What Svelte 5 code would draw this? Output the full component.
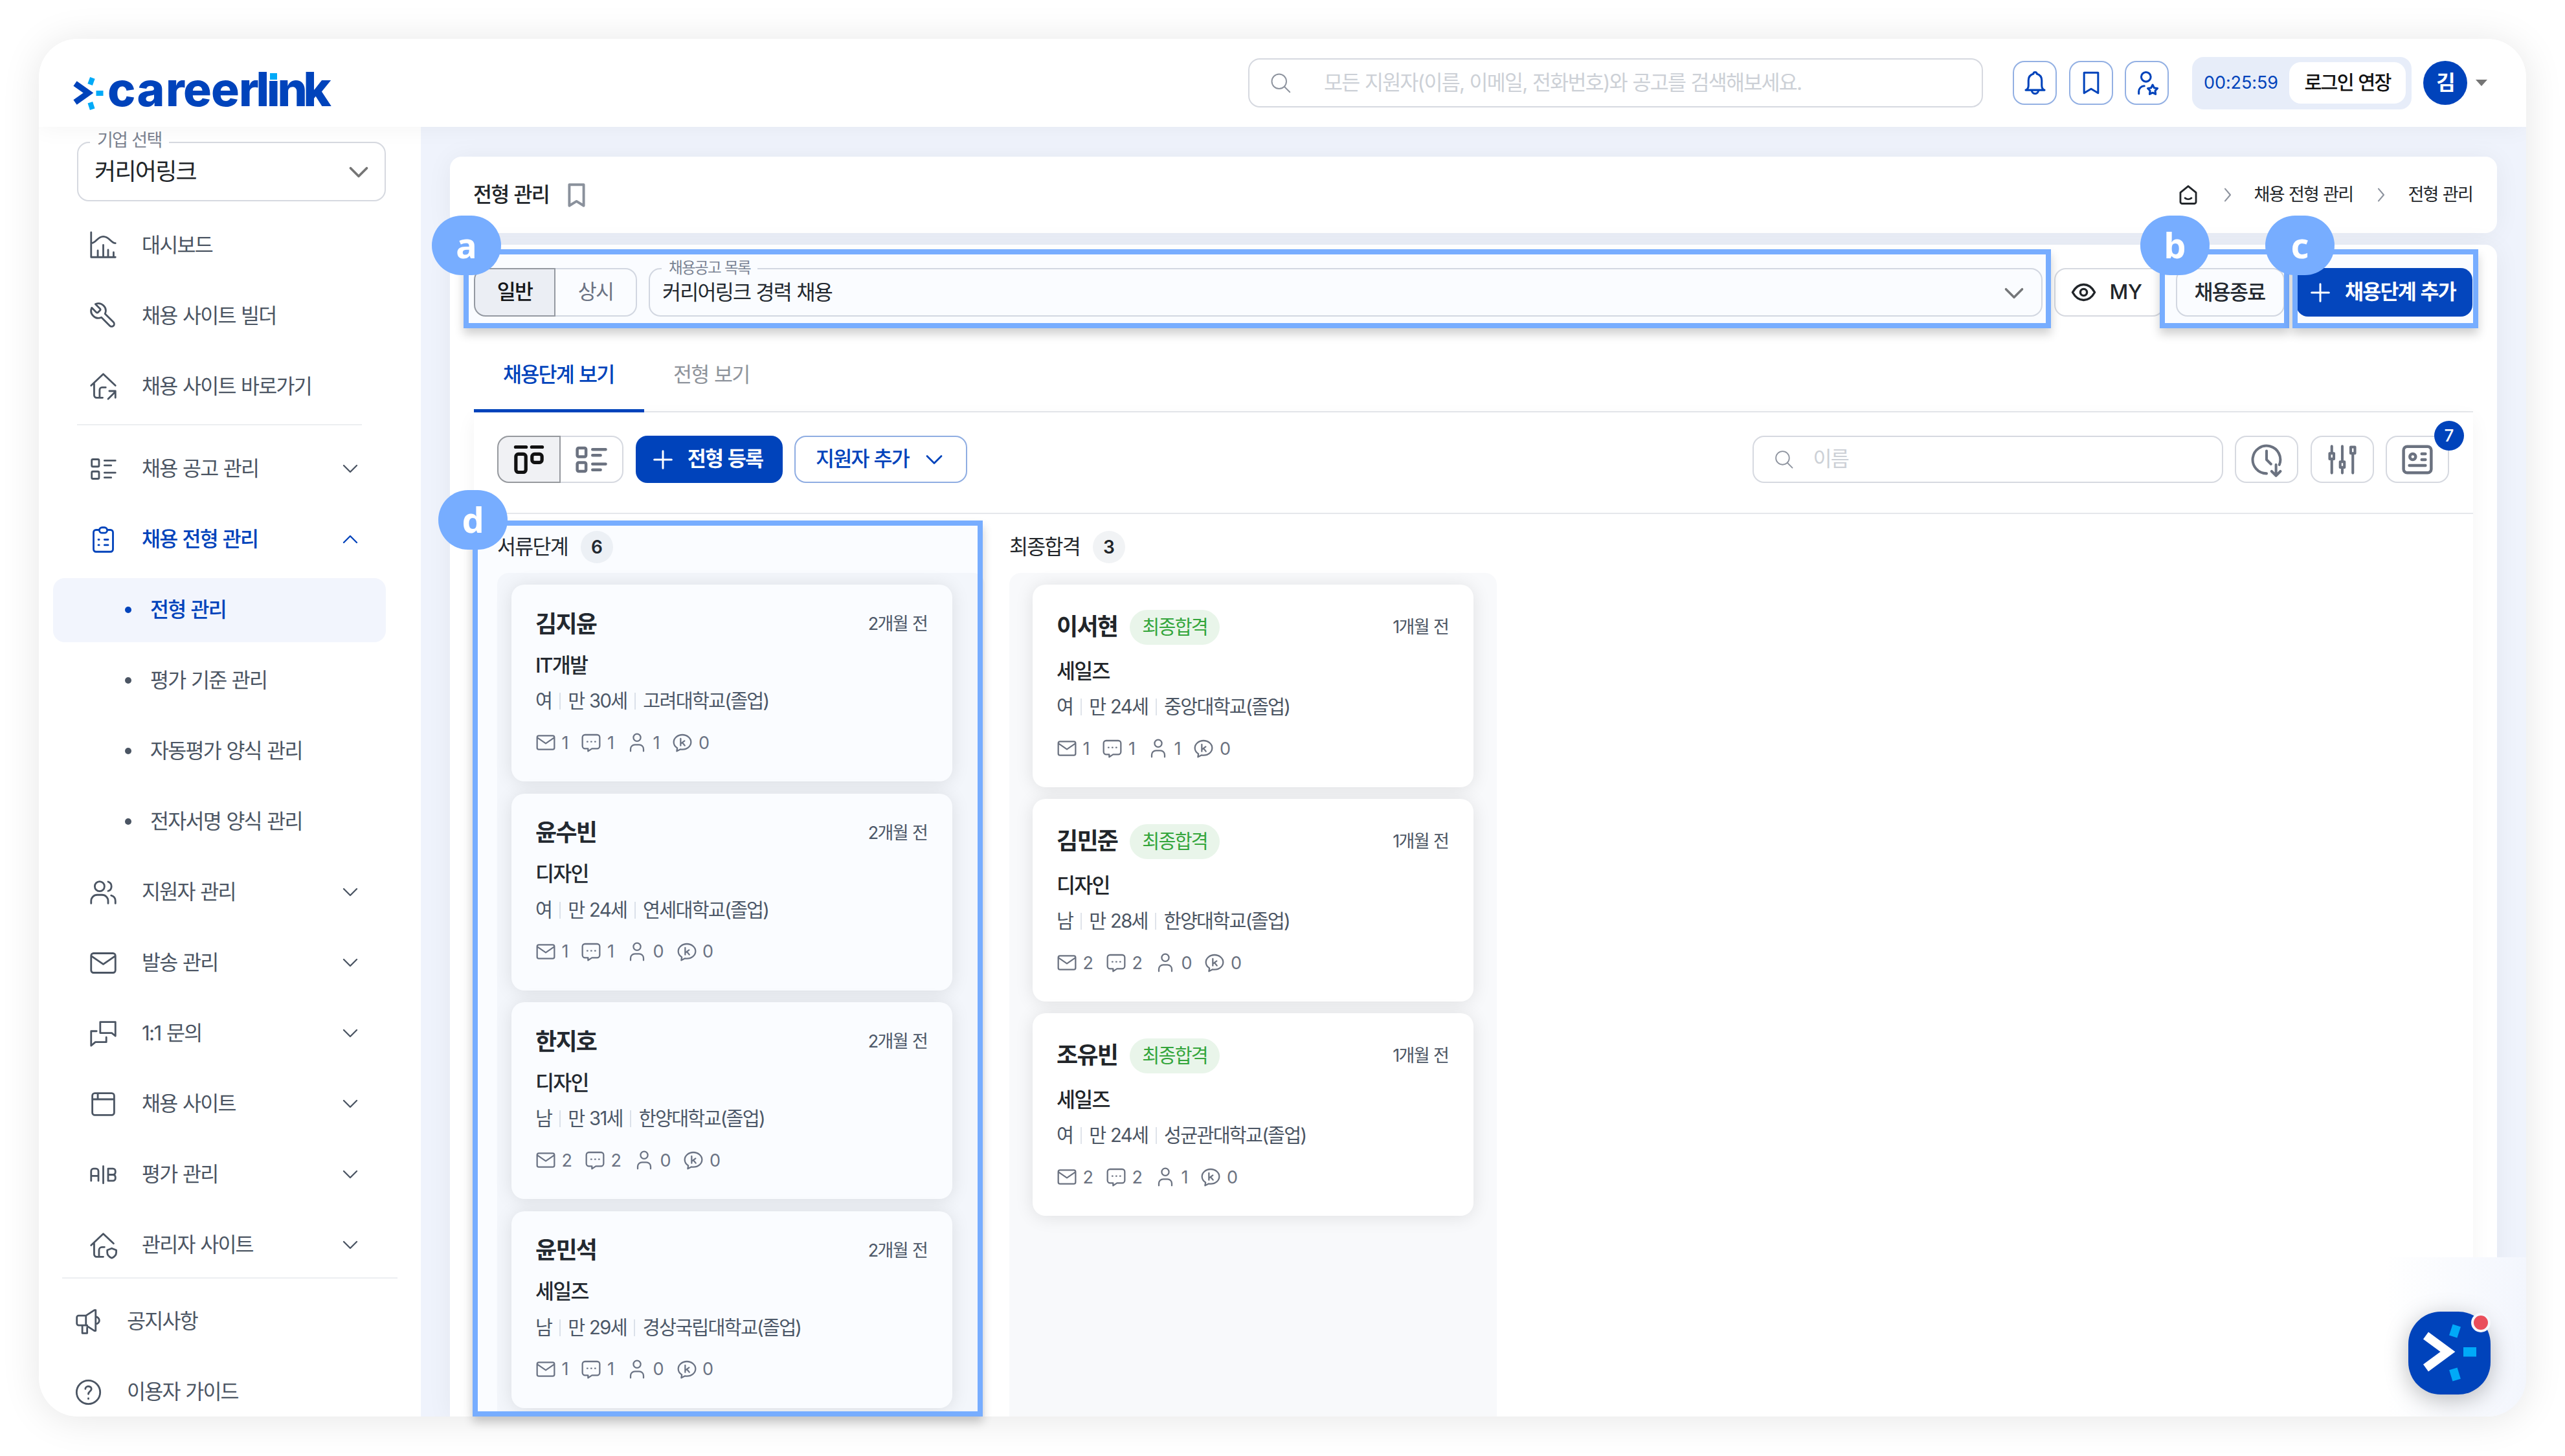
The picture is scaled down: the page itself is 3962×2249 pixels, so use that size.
<script lang="ts">
  type MenuItem = { icon: string; label: string; open?: boolean; arrow?: boolean };
  type Applicant = {
    name: string;
    job: string;
    sex: string;
    age: number;
    school: string;
    date: string;
    counts: number[];
    passed?: boolean;
  };

  const icons: Record<string, string> = {
    chart: 'M2 1.5v20.5h20M2 10.5c4 0 5-5.5 10-5.5s6.5 5.5 10 5.5M7.5 22v-5.5M12 22v-10M16 22v-6M20.5 22v-4',
    wrench: 'M9.3 6.3a1 1 0 0 1 0 1.4L7.7 9.3a1 1 0 0 1-1.4 0L2.53 5.53a6 6 0 0 0 7.94 7.94l6.91 6.91a2.12 2.12 0 0 0 3-3l-6.91-6.91a6 6 0 0 0-7.94-7.94z',
    homeLink: 'M2 11.5l10-9.5 10 9.5M4.5 10v9.5a2 2 0 0 0 2 2h5M9 21v-6a2 2 0 0 1 2-2h3M16 22.5l6-6M17 16h5v5.5',
    list: 'M3.5 4h4a1 1 0 0 1 1 1v4a1 1 0 0 1-1 1h-4a1 1 0 0 1-1-1V5a1 1 0 0 1 1-1zM3.5 14h4a1 1 0 0 1 1 1v4a1 1 0 0 1-1 1h-4a1 1 0 0 1-1-1v-4a1 1 0 0 1 1-1zM13 5h9M13 9h5.5M13 15h9M13 19h5.5',
    clipboard: 'M9 4H6a2 2 0 0 0-2 2v14a2 2 0 0 0 2 2h12a2 2 0 0 0 2-2V6a2 2 0 0 0-2-2h-3M11 2h2a2 2 0 0 1 0 4.5h-2a2 2 0 0 1 0-4.5zM8 12h.6M13 12h3M8 16.5h.6M13 16.5h3',
    users: 'M2 21v-2a5 5 0 0 1 5-5h4a5 5 0 0 1 5 5v2M9 3a4 4 0 1 1 0 8 4 4 0 0 1 0-8zM16 3.2a4 4 0 0 1 0 7.6M18.5 14.5c2.2.6 3.5 2.3 3.5 4.5v2',
    mail: 'M4 4h16a2 2 0 0 1 2 2v12a2 2 0 0 1-2 2H4a2 2 0 0 1-2-2V6a2 2 0 0 1 2-2zM2.5 6.5L12 13l9.5-6.5',
    chats: 'M9.5 2.5h12.5v11.5l-3-2.5h-9.5zM6.5 10H2v12l3.5-3h9v-4',
    browser: 'M5 3h14a2 2 0 0 1 2 2v14a2 2 0 0 1-2 2H5a2 2 0 0 1-2-2V5a2 2 0 0 1 2-2zM3 8h18M7.5 3.5v4',
    ab: 'M2 17v-8a2 2 0 0 1 2-2h2a2 2 0 0 1 2 2v8M2 13h6M12 5v14M16 7h4a2 2 0 0 1 2 2v1a2 2 0 0 1-2 2h-4zM16 12h4a2 2 0 0 1 2 2v1a2 2 0 0 1-2 2h-4z',
    homeShield: 'M2 12l10-9.500 8.500 8M4.500 10.500v9a2 2 0 0 0 2 2h5.500M8.500 21v-5a2.500 2.500 0 0 1 2.500-2.500h2M19 14.500l3.700 1.500v2c0 2-1.500 3.600-3.700 4.500-2.200-.900-3.700-2.500-3.700-4.500v-2z',
    mega: 'M4 7h6l7-4.500h1v17h-1l-7-4.500H4a1.500 1.500 0 0 1-1.500-1.500v-5A1.500 1.500 0 0 1 4 7zM10 7v8M7 15v6.500h4v-6.500M18 8a3 3 0 0 1 0 6',
    help: 'M12 2.300a9.700 9.700 0 1 1 0 19.400 9.700 9.700 0 0 1 0-19.400zM9.500 9.300c.200-3 5.300-2.700 5 .200-.200 1.700-2.500 1.800-2.500 4M12 17v.400',
    down: 'M6 9l6 6 6-6',
    up: 'M6 15l6-6 6 6',
    right: 'M9 5l6 7-6 7',
    search: 'M10.5 3a7.5 7.5 0 1 1 0 15 7.5 7.5 0 0 1 0-15zM16 16l5.5 5.5',
    bell: 'M10.5 3.5a1.500 1.500 0 0 1 3 0c2.800.800 4.500 3 4.500 6v4.500c0 2 .800 3.500 2.500 4.200h-17c1.700-.700 2.500-2.200 2.500-4.200V9.500c0-3 1.700-5.200 4.500-6zM9 18.500a3 3 0 0 0 6 0',
    bookmark: 'M5.5 2.5h13v19l-6.500-4-6.500 4z',
    userStar: 'M11 2a4.300 4.300 0 1 1 0 8.600A4.300 4.300 0 0 1 11 2zM4.500 21.500v-2a5 5 0 0 1 5-5M17 13.500l1.400 2.700 3 .500-2.100 2.200.400 3-2.700-1.300-2.700 1.300.400-3-2.100-2.200 3-.500z',
    home: 'M3.5 9.5L12 2.5l8.500 7v10a2 2 0 0 1-2 2h-13a2 2 0 0 1-2-2zM8.500 15.500c2 1.600 5 1.600 7 0',
    eye: 'M2 12c2.500-4.500 6-7 10-7s7.500 2.500 10 7c-2.500 4.500-6 7-10 7s-7.500-2.500-10-7zM12 9a3 3 0 1 1 0 6 3 3 0 0 1 0-6z',
    plus: 'M12 4v16M4 12h16',
    board: 'M2.500 3h7.500M14 3h7.500M4.500 8h3.500a1.800 1.800 0 0 1 1.800 1.800v9.400a1.800 1.800 0 0 1-1.800 1.800H4.500a1.800 1.800 0 0 1-1.800-1.800V9.800A1.800 1.800 0 0 1 4.500 8zM16 8h3.500a1.800 1.800 0 0 1 1.800 1.800v2.400a1.800 1.800 0 0 1-1.800 1.800H16a1.800 1.800 0 0 1-1.800-1.800V9.800A1.800 1.800 0 0 1 16 8z',
    clock: 'M12 21.500a9.500 9.500 0 1 1 8.800-6M12 6v6l3 3M18.500 15.500v7M15.500 20l3 3 3-3',
    sliders: 'M4.500 2.500v5M4.500 11.500v10M3 7.500h3v4H3zM12 2.500v10.500M12 18v3.500M10.500 13.500h3v4h-3zM19.500 7.500v14M18 3h3v4.500h-3z',
    profile: 'M5 3h14a2.500 2.500 0 0 1 2.500 2.500v13a2.500 2.500 0 0 1-2.500 2.500H5a2.500 2.500 0 0 1-2.500-2.500v-13A2.500 2.500 0 0 1 5 3zM8.800 8a2 2 0 1 1 0 4 2 2 0 0 1 0-4zM15 8h2.500M15 12h2.500M6.500 16h11',
    bubble: 'M5 3h14a3 3 0 0 1 3 3v10a3 3 0 0 1-3 3h-6l-4.500 3v-3H5a3 3 0 0 1-3-3V6a3 3 0 0 1 3-3zM7.500 11h.500M12 11h.500M16.500 11h.500',
    person: 'M12 2a4.200 4.200 0 1 1 0 8.400A4.200 4.200 0 0 1 12 2zM4.500 22v-2.500a5 5 0 0 1 5-5h5a5 5 0 0 1 5 5V22',
    kakao: 'M12 3c5.500 0 10 3.700 10 8.500s-4.500 8.500-10 8.500c-.900 0-1.600 0-2.400-.200L5.500 22l.600-3.600C3.500 16.800 2 14.300 2 11.500 2 6.700 6.500 3 12 3zM10 7.500v8M14.500 10l-4 3M12 12l2.800 3.500',
  };
  const statIcons = ['mail', 'bubble', 'person', 'kakao'];

  const topMenu: MenuItem[] = [
    { icon: 'chart', label: '대시보드' },
    { icon: 'wrench', label: '채용 사이트 빌더' },
    { icon: 'homeLink', label: '채용 사이트 바로가기' },
  ];
  const openMenu: MenuItem[] = [
    { icon: 'list', label: '채용 공고 관리', arrow: true },
    { icon: 'clipboard', label: '채용 전형 관리', arrow: true, open: true },
  ];
  const subMenu = ['전형 관리', '평가 기준 관리', '자동평가 양식 관리', '전자서명 양식 관리'];
  const restMenu: MenuItem[] = [
    { icon: 'users', label: '지원자 관리', arrow: true },
    { icon: 'mail', label: '발송 관리', arrow: true },
    { icon: 'chats', label: '1:1 문의', arrow: true },
    { icon: 'browser', label: '채용 사이트', arrow: true },
    { icon: 'ab', label: '평가 관리', arrow: true },
    { icon: 'homeShield', label: '관리자 사이트', arrow: true },
  ];
  const footMenu: MenuItem[] = [
    { icon: 'mega', label: '공지사항' },
    { icon: 'help', label: '이용자 가이드' },
  ];

  const columns: { title: string; total: number; cards: Applicant[] }[] = [
    {
      title: '서류단계',
      total: 6,
      cards: [
        { name: '김지윤', job: 'IT개발', sex: '여', age: 30, school: '고려대학교(졸업)', date: '2개월 전', counts: [1, 1, 1, 0] },
        { name: '윤수빈', job: '디자인', sex: '여', age: 24, school: '연세대학교(졸업)', date: '2개월 전', counts: [1, 1, 0, 0] },
        { name: '한지호', job: '디자인', sex: '남', age: 31, school: '한양대학교(졸업)', date: '2개월 전', counts: [2, 2, 0, 0] },
        { name: '윤민석', job: '세일즈', sex: '남', age: 29, school: '경상국립대학교(졸업)', date: '2개월 전', counts: [1, 1, 0, 0] },
      ],
    },
    {
      title: '최종합격',
      total: 3,
      cards: [
        { name: '이서현', job: '세일즈', sex: '여', age: 24, school: '중앙대학교(졸업)', date: '1개월 전', counts: [1, 1, 1, 0], passed: true },
        { name: '김민준', job: '디자인', sex: '남', age: 28, school: '한양대학교(졸업)', date: '1개월 전', counts: [2, 2, 0, 0], passed: true },
        { name: '조유빈', job: '세일즈', sex: '여', age: 24, school: '성균관대학교(졸업)', date: '1개월 전', counts: [2, 2, 1, 0], passed: true },
      ],
    },
  ];
</script>

{#snippet icon(name: string, size: number, weight: number = 1.5)}
  <svg class="icon" width={size} height={size} viewBox="0 0 24 24" stroke-width={weight}>
    <path d={icons[name]} />
  </svg>
{/snippet}

{#snippet menuRow(item: MenuItem)}
  <div class="row" class:on={item.open}>
    {@render icon(item.icon, 45)}
    <span class="label">{item.label}</span>
    {#if item.arrow}{@render icon(item.open ? 'up' : 'down', 40, 1.4)}{/if}
  </div>
{/snippet}

<div class="window">
  <header>
    <svg class="logo" width="440" height="90" viewBox="110 95 440 90">
      <path class="mark" d="M116 129l20.500 14.500-20.500 14.500" />
      <g class="ray">
        <rect x="137" y="120" width="8" height="11" transform="rotate(20 141 125.500)" />
        <rect x="148.500" y="140" width="11" height="8" />
        <rect x="137" y="158" width="8" height="11" transform="rotate(-18 141 163.500)" />
      </g>
      <text x="166 211.500 256 283 326 369 395.500 412 428.500 468.500" y="164">careerlink</text>
      <rect class="dot-bg" x="413" y="100" width="19" height="25" />
      <rect class="ray" x="417" y="113" width="11" height="10" />
    </svg>
    <div class="search global">
      {@render icon('search', 36, 1.3)}
      <span>모든 지원자(이름, 이메일, 전화번호)와 공고를 검색해보세요.</span>
    </div>
    <div class="quick">
      <button>{@render icon('bell', 41, 1.8)}</button>
      <button>{@render icon('bookmark', 40, 1.8)}</button>
      <button>{@render icon('userStar', 41, 1.8)}</button>
    </div>
    <div class="session">
      <span class="timer">00:25:59</span>
      <button>로그인 연장</button>
    </div>
    <div class="avatar">김</div>
    <i class="caret"></i>
  </header>

  <div class="body">
    <aside>
      <div class="company">
        <span class="legend">기업 선택</span>
        <span>커리어링크</span>
        {@render icon('down', 50, 1.8)}
      </div>
      <nav>
        {#each topMenu as item}{@render menuRow(item)}{/each}
        <hr />
        {#each openMenu as item}{@render menuRow(item)}{/each}
        {#each subMenu as label, i}
          <div class="row sub" class:active={i === 0}><i></i><span class="label">{label}</span></div>
        {/each}
        {#each restMenu as item}{@render menuRow(item)}{/each}
      </nav>
      <nav class="foot">
        {#each footMenu as item}{@render menuRow(item)}{/each}
      </nav>
    </aside>

    <main>
      <section class="crumbs">
        <h1>전형 관리</h1>
        <span class="pin">{@render icon('bookmark', 41, 2.3)}</span>
        <div class="path">
          {@render icon('home', 34, 2)}
          <span class="sep">{@render icon('right', 32, 1.6)}</span>
          <span>채용 전형 관리</span>
          <span class="sep">{@render icon('right', 32, 1.6)}</span>
          <span>전형 관리</span>
        </div>
      </section>

      <section class="board">
        <div class="filters">
          <div class="toggle kind">
            <button class="sel">일반</button>
            <button>상시</button>
          </div>
          <div class="posting">
            <span class="legend">채용공고 목록</span>
            <span>커리어링크 경력 채용</span>
            {@render icon('down', 50, 1.7)}
          </div>
          <button class="btn my">{@render icon('eye', 41, 2)}<span>MY</span></button>
          <button class="btn end">채용종료</button>
          <button class="btn primary step">{@render icon('plus', 40, 1.8)}<span>채용단계 추가</span></button>
        </div>

        <div class="tabs">
          <span class="tab current">채용단계 보기</span>
          <span class="tab">전형 보기</span>
        </div>

        <div class="panel">
          <div class="tools">
            <div class="toggle view">
              <button class="sel">{@render icon('board', 52, 2.4)}</button>
              <button>{@render icon('list', 54, 2)}</button>
            </div>
            <button class="btn primary reg">{@render icon('plus', 40, 1.8)}<span>전형 등록</span></button>
            <button class="btn outline"><span>지원자 추가</span>{@render icon('down', 44, 1.5)}</button>
            <div class="search local">
              {@render icon('search', 33, 1.3)}
              <span>이름</span>
            </div>
            <button class="tool">{@render icon('clock', 54, 1.8)}</button>
            <button class="tool">{@render icon('sliders', 52, 1.9)}</button>
            <button class="tool">{@render icon('profile', 54, 2)}<em>7</em></button>
          </div>

          <div class="columns">
            {#each columns as col}
              <div class="column">
                <h2>{col.title}<b>{col.total}</b></h2>
                <div class="lane" class:final={col.cards[0].passed}>
                  {#each col.cards as a}
                    <article>
                      <div class="head" class:tall={a.passed}>
                        <strong>{a.name}</strong>
                        {#if a.passed}<span class="badge">최종합격</span>{/if}
                        <time>{a.date}</time>
                      </div>
                      <div class="job">{a.job}</div>
                      <div class="info">
                        <span>{a.sex}</span><i></i><span>만 {a.age}세</span><i></i><span>{a.school}</span>
                      </div>
                      <div class="stats">
                        {#each a.counts as n, i}
                          <span>{@render icon(statIcons[i], 32, 1.7)}{n}</span>
                        {/each}
                      </div>
                    </article>
                  {/each}
                </div>
              </div>
            {/each}
          </div>
        </div>
      </section>
    </main>
  </div>

  <div class="dock">
    <div class="chat">
      <svg width="127" height="128" viewBox="0 0 127 128">
        <path d="M27 37l34 25-34 25" fill="none" stroke="#fff" stroke-width="13.500" />
        <g class="ray">
          <rect x="65.500" y="21" width="13" height="18" transform="rotate(18 72 30)" />
          <rect x="85" y="55" width="20" height="14.500" />
          <rect x="65.500" y="88" width="13" height="18" transform="rotate(-17 72 97)" />
        </g>
      </svg>
      <i></i>
    </div>
  </div>
</div>

<!-- guide callouts laid over the page -->
<div class="frame a"></div>
<div class="frame b"></div>
<div class="frame c"></div>
<div class="frame d"></div>
<span class="mark-label a">a</span>
<span class="mark-label b">b</span>
<span class="mark-label c">c</span>
<span class="mark-label d">d</span>

<style>
  :global(body) {
    background: #fff;
  }
  :global(#app) {
    position: relative;
    width: 3962px;
    height: 2249px;
    overflow: hidden;
    font-family: Inter, 'Noto Sans CJK KR', sans-serif;
    font-size: 31.5px;
    line-height: 1.3;
    letter-spacing: -0.055em;
    word-spacing: 0.04em;
    color: #212529;
    --blue: #0043bb;
    --line: #d6d9e0;
    --gray: #4b5563;
  }
  :global(#app *) {
    box-sizing: border-box;
  }
  button {
    display: flex;
    align-items: center;
    justify-content: center;
    padding: 0;
    border: 2px solid var(--line);
    border-radius: 18px;
    background: #fff;
    color: inherit;
    font: inherit;
    letter-spacing: inherit;
    word-spacing: inherit;
    white-space: nowrap;
  }
  .icon {
    flex: none;
    display: block;
    fill: none;
    stroke: currentColor;
    stroke-linecap: round;
    stroke-linejoin: round;
  }
  .ray {
    fill: #00aaf8;
  }
  .window {
    position: relative;
    width: 3842px;
    height: 2128px;
    margin: 60px 0 0 60px;
    border-radius: 60px;
    background: #fff;
    box-shadow: 0 4px 60px rgba(0, 0, 0, 0.1);
    overflow: hidden;
  }

  /* header */
  header {
    position: relative;
    z-index: 2;
    display: flex;
    align-items: center;
    height: 136px;
    padding: 0 60px 0 50px;
    background: #fff;
    box-shadow: 0 0 36px rgba(0, 0, 0, 0.05);
  }
  .logo {
    margin-top: 24px;
  }
  .logo text {
    font-size: 73px;
    font-weight: 800;
    letter-spacing: 0;
    fill: var(--blue);
  }
  .mark {
    fill: none;
    stroke: var(--blue);
    stroke-width: 9;
  }
  .dot-bg {
    fill: #fff;
  }
  .search {
    display: flex;
    align-items: center;
    border: 2px solid var(--line);
    border-radius: 18px;
    color: #ccd0d6;
  }
  .search .icon {
    color: #8d939e;
  }
  .global {
    width: 1135px;
    height: 76px;
    margin-left: auto;
    padding-left: 30px;
    gap: 49px;
  }
  .quick {
    display: flex;
    gap: 18.5px;
    margin-left: 46px;
    color: var(--blue);
  }
  .quick button {
    width: 68px;
    height: 68px;
    border-color: #93b0e3;
  }
  .session {
    display: flex;
    align-items: center;
    justify-content: space-between;
    width: 339px;
    height: 81px;
    margin-left: 36px;
    padding: 0 9px 0 18px;
    border-radius: 18px;
    background: #e7edf9;
  }
  .timer {
    font-size: 27px;
    letter-spacing: -0.003em;
    color: var(--blue);
  }
  .session button {
    width: 180px;
    height: 64px;
    border: 0;
    font-size: 29.25px;
    font-weight: 500;
    color: #111;
  }
  .avatar {
    width: 68px;
    margin-left: 18px;
    border-radius: 50%;
    background: var(--blue);
    color: #fff;
    font-size: 32px;
    font-weight: 600;
    line-height: 68px;
    text-align: center;
  }
  .caret {
    margin-left: 13px;
    border: 9.5px solid transparent;
    border-top: 10px solid #757575;
    border-bottom: 0;
  }

  /* sidebar */
  .body {
    display: flex;
    height: 1992px;
  }
  aside {
    width: 590px;
    flex: none;
    padding-top: 23px;
    color: var(--gray);
  }
  .company,
  .posting {
    position: relative;
    display: flex;
    align-items: center;
    justify-content: space-between;
    border: 2px solid var(--line);
    border-radius: 18px;
    color: #212529;
  }
  .company {
    width: 477px;
    height: 92px;
    margin: 0 0 18px 59px;
    padding: 1px 15px 0 25px;
    font-size: 36px;
  }
  .company .icon,
  .posting .icon {
    color: #757575;
  }
  .legend {
    position: absolute;
    top: -22px;
    left: 18px;
    padding: 0 11px;
    background: #fff;
    color: #7b8290;
    font-size: 27px;
  }
  nav {
    display: flex;
    flex-direction: column;
    gap: 9.6px;
    padding-left: 22px;
  }
  hr {
    width: 440px;
    height: 2px;
    margin: -1px 0 8px 37px;
    border: 0;
    background: #eceef1;
  }
  .row {
    display: flex;
    align-items: center;
    width: 514px;
    height: 99.4px;
    padding: 0 35px 0 55px;
    border-radius: 18px;
  }
  .row .label {
    flex: 1;
    margin-left: 37px;
    padding-top: 1px;
  }
  .row.on {
    color: var(--blue);
    font-weight: 500;
  }
  .row.sub {
    padding-left: 111px;
  }
  .row.sub i {
    width: 10px;
    height: 10px;
    border-radius: 50%;
    background: currentColor;
  }
  .row.sub .label {
    margin-left: 29px;
  }
  .row.active {
    background: #f2f5fd;
    color: var(--blue);
    font-weight: 500;
  }
  .foot {
    width: 518px;
    margin-left: 36px;
    padding: 17px 0 0;
    border-top: 2px solid #eceef1;
  }
  .foot .row {
    padding-left: 18px;
  }

  /* main */
  main {
    flex: 1;
    display: flex;
    flex-direction: column;
    gap: 18px;
    padding: 46px 45px 0;
    background: #eff3fc;
  }
  section {
    background: #fff;
    box-shadow: 0 2px 40px rgba(0, 0, 0, 0.055);
  }
  .crumbs {
    display: flex;
    align-items: center;
    height: 118px;
    padding: 0 38px 0 36px;
    border-radius: 18px;
  }
  h1 {
    margin: 0;
    font-size: 31.5px;
    font-weight: 500;
  }
  .pin {
    margin-left: 22px;
    color: #8a919c;
  }
  .path {
    display: flex;
    align-items: center;
    margin-left: auto;
    font-size: 27px;
  }
  .sep {
    margin: 0 25px 0 28px;
    color: #8d939e;
  }
  .board {
    flex: 1;
    padding: 36px 37px 0;
    border-radius: 18px 18px 0 0;
  }
  .filters {
    display: flex;
    gap: 18px;
    height: 75px;
  }
  .toggle {
    display: flex;
    flex: none;
  }
  .toggle button {
    color: #6b7280;
    border-left: 0;
    border-radius: 0 18px 18px 0;
  }
  .toggle .sel {
    border: 2px solid #96999e;
    border-radius: 18px 0 0 18px;
    background: #f0f1f4;
    color: #111;
    font-weight: 500;
  }
  .kind button {
    width: 126px;
  }
  .posting {
    flex: none;
    width: 2153px;
    padding: 2px 17px 0 19px;
  }
  .posting .legend {
    top: -17px;
    font-size: 23.6px;
  }
  .btn {
    flex: none;
    font-weight: 500;
  }
  .my {
    width: 170px;
    padding-right: 9px;
    gap: 19px;
    letter-spacing: -0.01em;
  }
  .end {
    width: 168px;
    padding: 1px 2px 0 0;
  }
  .primary {
    border: 0;
    background: var(--blue);
    color: #fff;
    font-weight: 600;
  }
  .step {
    width: 272px;
    padding-right: 9px;
    gap: 18px;
  }
  .tabs {
    display: flex;
    height: 148px;
    border-bottom: 2px solid #e5e7eb;
  }
  .tab {
    padding: 70px 45px 0;
    color: #8f949c;
    font-size: 31.5px;
    white-space: nowrap;
  }
  .current {
    width: 263px;
    height: 148px;
    border-bottom: 5px solid var(--blue);
    color: var(--blue);
    font-weight: 500;
  }
  .panel {
    height: 1551px;
    box-shadow: 0 10px 28px rgba(0, 0, 0, 0.05);
  }
  .tools {
    display: flex;
    gap: 18.5px;
    height: 157px;
    padding: 36px 37px 46px 36px;
    border-bottom: 2px solid #e5e7eb;
  }
  .view button {
    width: 97.5px;
  }
  .reg {
    width: 227px;
    padding-right: 8px;
    gap: 18px;
  }
  .outline {
    width: 267px;
    padding-left: 4px;
    gap: 17px;
    border-color: #8fade2;
    color: var(--blue);
  }
  .local {
    width: 727px;
    margin-left: auto;
    padding-left: 30px;
    gap: 29px;
  }
  .tool {
    position: relative;
    width: 98px;
    color: #6b7280;
  }
  .tool em {
    position: absolute;
    top: -25px;
    right: -25px;
    width: 46px;
    border-radius: 50%;
    background: var(--blue);
    color: #fff;
    font-size: 26px;
    font-style: normal;
    font-weight: 500;
    line-height: 46px;
    letter-spacing: 0;
  }

  /* kanban */
  .columns {
    display: flex;
    gap: 38px;
    padding: 26px 36px 0;
  }
  .column {
    width: 753px;
  }
  h2 {
    display: flex;
    align-items: center;
    gap: 20px;
    height: 50px;
    margin: 0 0 15px;
    font-size: 31.5px;
    font-weight: 400;
  }
  h2 b {
    width: 50px;
    border-radius: 50%;
    background: #f1f3f5;
    font-size: 28px;
    font-weight: 600;
    line-height: 50px;
    letter-spacing: 0;
    text-align: center;
  }
  .lane {
    display: flex;
    flex-direction: column;
    gap: 18.5px;
    height: 1330px;
    padding: 18px 50px 0 22px;
    border-radius: 18px 18px 0 0;
    background: #f8f9fb;
  }
  .final {
    gap: 18px;
    padding: 18px 36px 0;
  }
  article {
    flex: none;
    padding: 38.5px 39px 42.5px 37px;
    border-radius: 20px;
    background: #fff;
    box-shadow: 0 2px 28px rgba(0, 0, 0, 0.1);
  }
  .head {
    display: flex;
    align-items: center;
    height: 45px;
  }
  .tall {
    height: 54px;
  }
  .head strong {
    font-size: 36px;
    font-weight: 700;
  }
  .badge {
    width: 139px;
    margin-left: 19px;
    border-radius: 27px;
    background: #e9f5ea;
    color: #34a53c;
    font-size: 29.25px;
    line-height: 54px;
    text-align: center;
  }
  time {
    margin-left: auto;
    font-size: 27px;
    color: var(--gray);
  }
  .job {
    margin-top: 18px;
    font-weight: 500;
    line-height: 45px;
  }
  .info {
    display: flex;
    align-items: center;
    gap: 11.5px;
    margin-top: 13.5px;
    font-size: 29.25px;
    line-height: 40px;
    color: var(--gray);
  }
  .info i {
    width: 2px;
    height: 26px;
    background: #dfe3ea;
  }
  .stats {
    display: flex;
    gap: 19px;
    margin-top: 26.5px;
    font-size: 27px;
    line-height: 35px;
    letter-spacing: 0;
    color: #6b7280;
  }
  .stats span {
    display: flex;
    align-items: center;
    gap: 8.5px;
  }

  /* chat launcher */
  .dock {
    position: absolute;
    right: 0;
    bottom: 0;
    z-index: 3;
    width: 290px;
    height: 246px;
    background: linear-gradient(90deg, #fff 25%, #f3f6fd);
  }
  .chat {
    position: relative;
    width: 127px;
    height: 128px;
    margin: 84px 0 0 108px;
    border-radius: 50px;
    background: var(--blue);
    box-shadow: 0 8px 36px rgba(0, 0, 0, 0.26);
  }
  .chat i {
    position: absolute;
    top: 2px;
    right: 0;
    width: 30px;
    height: 30px;
    border: 4px solid #f6f7fc;
    border-radius: 50%;
    background: #ea4e5b;
  }

  /* callouts */
  .frame {
    position: absolute;
    top: 385px;
    height: 122px;
    border: 8px solid #77adff;
    background: rgba(119, 173, 255, 0.035);
    box-shadow: 0 9px 14px rgba(0, 0, 0, 0.19);
  }
  .frame.a {
    left: 716px;
    width: 2452px;
  }
  .frame.b {
    left: 3336px;
    width: 200px;
  }
  .frame.c {
    left: 3541px;
    width: 287px;
  }
  .frame.d {
    top: 804px;
    left: 730px;
    width: 788px;
    height: 1384px;
  }
  .mark-label {
    position: absolute;
    top: 333px;
    width: 107px;
    height: 92px;
    border-radius: 48px;
    background: #77adff;
    color: #fff;
    font-family: 'Noto Sans', sans-serif;
    font-size: 54px;
    font-weight: 700;
    line-height: 90px;
    letter-spacing: 0;
    text-align: center;
  }
  .mark-label.a {
    left: 667px;
  }
  .mark-label.b {
    left: 3306px;
  }
  .mark-label.c {
    left: 3499px;
  }
  .mark-label.d {
    top: 757px;
    left: 677px;
  }
</style>
